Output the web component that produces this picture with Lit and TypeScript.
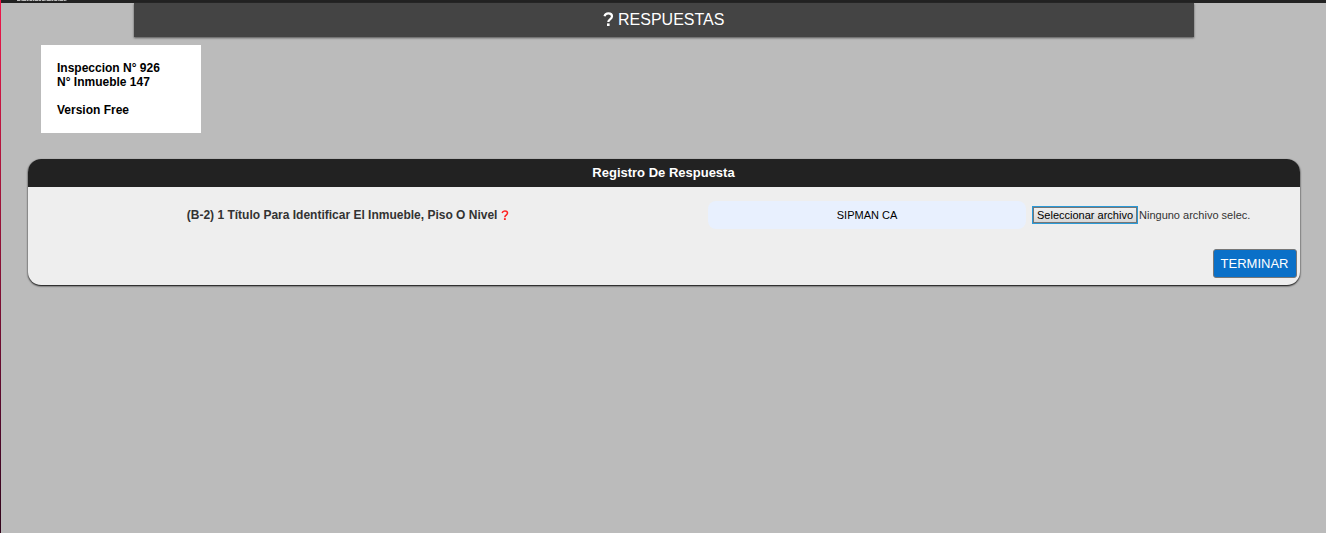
import { LitElement, html, css, svg } from "lit";
import { customElement, state } from "lit/decorators.js";

const questionMark = svg`
  <path d="M1.500 4.200C2 2.400 3.300 1.300 5.300 1.300c2.200 0 3.700 1.200 3.700 3 0 1.500-.8 2.100-1.800 2.900C6.100 8 5.300 8.500 5.300 10" fill="none" stroke="currentColor" stroke-width="2.200"/>
  <rect x="4" y="11.400" width="2.600" height="2.600" fill="currentColor"/>`;

@customElement("app-root")
export class AppRoot extends LitElement {
  @state() private fileName = "Ninguno archivo selec.";

  static styles = css`
    :host {
      display: block;
      box-sizing: border-box;
      min-height: 100vh;
      background: #bbb;
      border-left: 1px solid;
      border-image: linear-gradient(#f0164a, #a5143a 35%, #50082a 80%, #30041a) 1;
      font-family: "Liberation Sans", Arial, sans-serif;
      color: #333;
    }
    .topbar {
      height: 3px;
      background: #222;
    }
    .tagline {
      display: block;
      width: 50px;
      height: 2px;
      margin-left: 16px;
    }
    .title {
      box-sizing: border-box;
      width: 80%;
      margin: 0 auto;
      padding: 8px 0;
      background: #444;
      color: #fff;
      font-size: 16px;
      font-weight: 400;
      line-height: 18px;
      text-align: center;
      box-shadow: 0 1px 2px #555;
    }
    .title svg {
      width: 11px;
      height: 14px;
      vertical-align: -1px;
    }
    .info {
      width: 128px;
      margin: 8px 0 26px 40px;
      padding: 16px;
      background: #fff;
      color: #000;
      font-size: 12px;
      font-weight: 700;
      line-height: 14px;
    }
    .info p {
      margin: 0;
    }
    .info .version {
      margin-top: 14px;
    }
    .card {
      width: 96%;
      margin: 0 auto;
      background: #eee;
      border-radius: 13px;
      overflow: hidden;
      box-shadow: 0 1px 2px #000;
    }
    .card-title {
      margin: 0;
      background: #222;
      color: #fff;
      font-size: 13px;
      line-height: 28px;
      text-align: center;
    }
    .row {
      display: grid;
      grid-template-columns: 53.5% 25% 1fr;
      align-items: center;
      padding-top: 14px;
    }
    .question {
      padding-right: 40px;
      font-size: 12px;
      font-weight: 700;
      line-height: 16px;
      text-align: center;
    }
    .question svg {
      width: 8px;
      height: 10px;
      color: #f22;
      vertical-align: -1px;
    }
    .answer {
      box-sizing: border-box;
      width: 100%;
      height: 28px;
      border: 0;
      border-radius: 8px;
      background: #e8f0fe;
      color: #000;
      font: 11px "Liberation Sans", Arial, sans-serif;
      text-align: center;
    }
    .file {
      position: relative;
      display: flex;
      align-items: center;
      gap: 1px;
      margin-left: 6px;
      font-size: 11px;
      line-height: 14px;
      white-space: nowrap;
    }
    .file input {
      position: absolute;
      inset: 0;
      width: 100%;
      opacity: 0;
    }
    .pick {
      padding: 0 3px;
      border: 1px solid #767676;
      outline: 1px solid #2a9ad8;
      margin: 1px;
      background: linear-gradient(#f0f0f0, #d8d8d8);
      color: #000;
    }
    .actions {
      display: flex;
      justify-content: flex-end;
      padding: 20px 3px 7px;
    }
    .finish {
      height: 29px;
      padding: 0 7px;
      border: 1px solid #777;
      border-radius: 3px;
      background: #0a70c8;
      color: #fff;
      font: 13px "Liberation Sans", Arial, sans-serif;
    }
  `;

  private onFile(e: Event) {
    const file = (e.target as HTMLInputElement).files?.[0];
    this.fileName = file ? file.name : "Ninguno archivo selec.";
  }

  render() {
    return html`
      <header class="topbar">
        <svg class="tagline" viewBox="0 0 50 2" aria-hidden="true">
          <path d="M0 .5H50" stroke="#bbb" stroke-width="1" stroke-dasharray="3 .6 1 .5 4 .5 2 .8" />
        </svg>
      </header>
      <h1 class="title">
        <svg viewBox="0 0 11 14" aria-hidden="true">${questionMark}</svg>
        RESPUESTAS
      </h1>
      <section class="info">
        <p>Inspeccion N° 926</p>
        <p>N° Inmueble 147</p>
        <p class="version">Version Free</p>
      </section>
      <form class="card" @submit=${(e: Event) => e.preventDefault()}>
        <h2 class="card-title">Registro De Respuesta</h2>
        <div class="row">
          <label class="question" for="answer">
            (B-2) 1 Título Para Identificar El Inmueble, Piso O Nivel
            <svg viewBox="0 0 11 14" aria-hidden="true">${questionMark}</svg>
          </label>
          <input class="answer" id="answer" type="text" value="SIPMAN CA" />
          <label class="file">
            <input type="file" @change=${this.onFile} />
            <span class="pick">Seleccionar archivo</span>
            <span>${this.fileName}</span>
          </label>
        </div>
        <div class="actions">
          <button class="finish" type="submit">TERMINAR</button>
        </div>
      </form>
    `;
  }
}
